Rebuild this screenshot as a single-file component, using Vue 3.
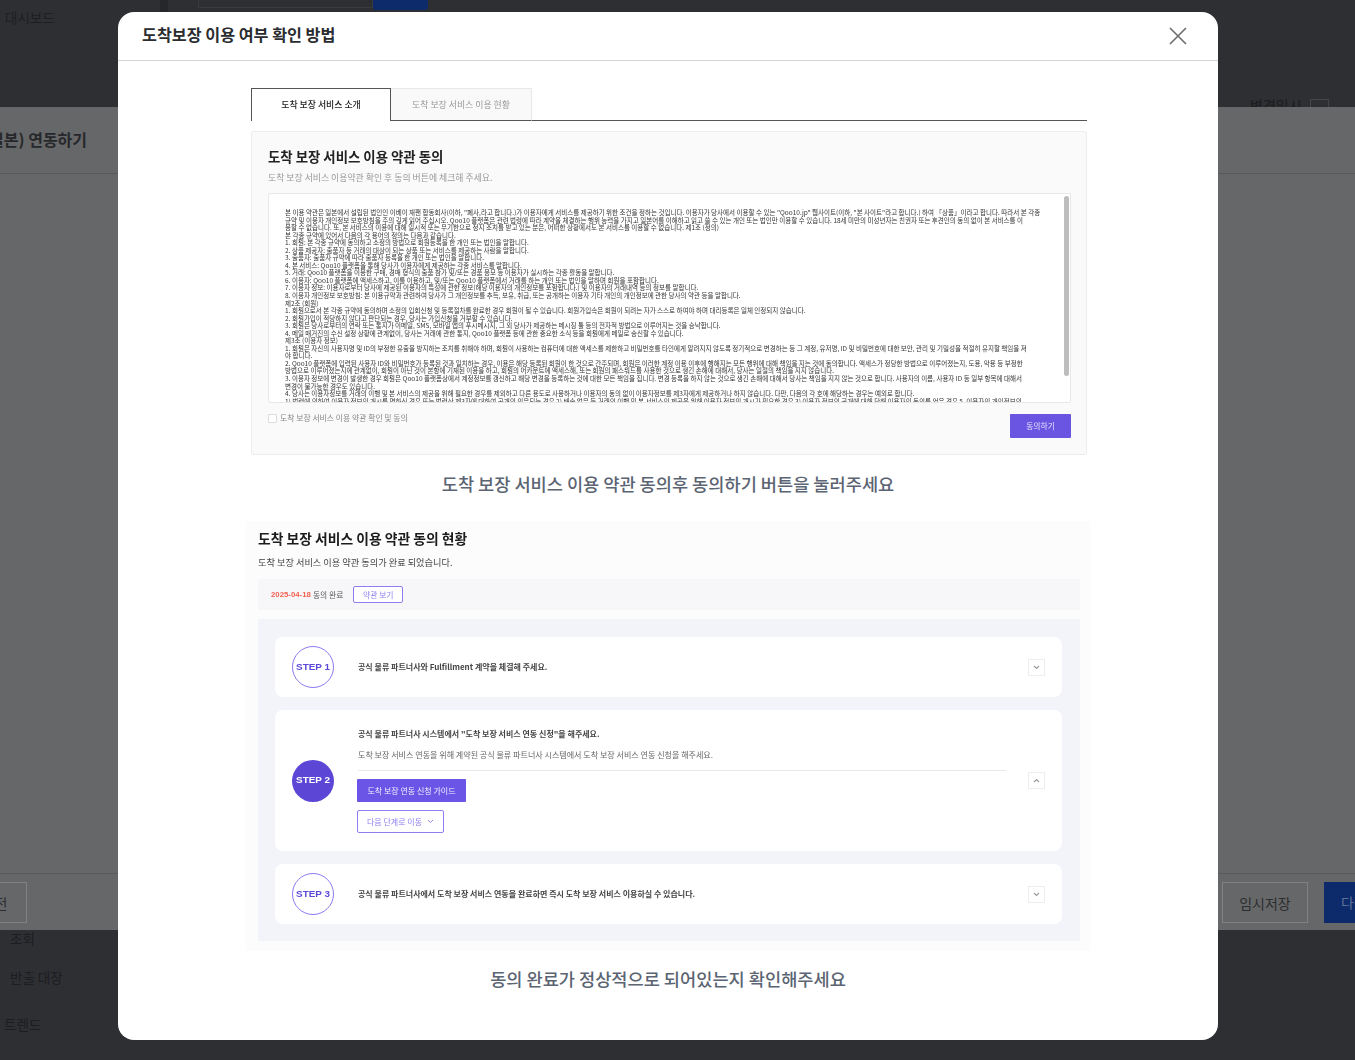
<script setup>
const terms = [
  '본 이용 약관은 일본에서 설립된 법인인 이베이 재팬 합동회사(이하, "폐사,라고 합니다.)가 이용자에게 서비스를 제공하기 위한 조건을 정하는 것입니다. 이용자가 당사에서 이용할 수 있는 "Qoo10.jp" 웹사이트(이하, "본 사이트"라고 합니다.) 하여 「상품」이라고 합니다. 따라서 본 각종',
  '규약 및 이용자 개인정보 보호방침을 주의 깊게 읽어 주십시오. Qoo10 플랫폼은 관련 법령에 따라 계약을 체결하는 행위 능력을 가지고 일본어를 이해하고 읽고 쓸 수 있는 개인 또는 법인만 이용할 수 있습니다. 18세 미만의 미성년자는 친권자 또는 후견인의 동의 없이 본 서비스를 이',
  '용할 수 없습니다. 또, 본 서비스의 이용에 대해 일시적 또는 무기한으로 정지 조치를 받고 있는 분은, 어떠한 상황에서도 본 서비스를 이용할 수 없습니다. 제1조 (정의)',
  '본 각종 규약에 있어서 다음의 각 용어의 정의는 다음과 같습니다.',
  '1. 회원: 본 각종 규약에 동의하고 소정의 방법으로 회원등록을 한 개인 또는 법인을 말합니다.',
  '2. 상품 제공자: 출품자 등 거래의 대상이 되는 상품 또는 서비스를 제공하는 사람을 말합니다.',
  '3. 출품자: 출품자 규약에 따라 출품자 등록을 한 개인 또는 법인을 말합니다.',
  '4. 본 서비스: Qoo10 플랫폼을 통해 당사가 이용자에게 제공하는 각종 서비스를 말합니다.',
  '5. 거래: Qoo10 플랫폼을 이용한 구매, 경매 형식의 출품 참가 및/또는 경품 응모 등 이용자가 실시하는 각종 활동을 말합니다.',
  '6. 이용자: Qoo10 플랫폼에 액세스하고, 이를 이용하고, 및/또는 Qoo10 플랫폼에서 거래를 하는 개인 또는 법인을 말하며 회원을 포함합니다.',
  '7. 이용자 정보: 이용자로부터 당사에 제공된 이용자의 특성에 관한 정보(해당 이용자의 개인정보를 포함합니다.) 및 이용자의 거래내역 등의 정보를 말합니다.',
  '8. 이용자 개인정보 보호방침: 본 이용규약과 관련하여 당사가 그 개인정보를 추득, 보유, 취급, 또는 공개하는 이용자 기타 개인의 개인정보에 관한 당사의 약관 등을 말합니다.',
  '제2조 (회원)',
  '1. 회원으로서 본 각종 규약에 동의하며 소정의 입회신청 및 등록절차를 완료한 경우 회원이 될 수 있습니다. 회원가입속은 회원이 되려는 자가 스스로 하여야 하며 대리등록은 일체 인정되지 않습니다.',
  '2. 회원가입이 적당하지 않다고 판단되는 경우, 당사는 가입신청을 거부할 수 있습니다.',
  '3. 회원은 당사로부터의 연락 또는 통지가 이메일, SMS, 모바일 앱의 푸시메시지, 그 외 당사가 제공하는 메시징 툴 등의 전자적 방법으로 이루어지는 것을 승낙합니다.',
  '4. 메일 매거진의 수신 설정 상황에 관계없이, 당사는 거래에 관한 통지, Qoo10 플랫폼 등에 관한 중요한 소식 등을 회원에게 메일로 송신할 수 있습니다.',
  '제3조 (이용자 정보)',
  '1. 회원은 자신의 사용자명 및 ID의 부정한 유출을 방지하는 조치를 취해야 하며, 회원이 사용하는 컴퓨터에 대한 액세스를 제한하고 비밀번호를 타인에게 알려지지 않도록 정기적으로 변경하는 등 그 계정, 유저명, ID 및 비밀번호에 대한 보안, 관리 및 기밀성을 적절히 유지할 책임을 져',
  '야 합니다.',
  '2. Qoo10 플랫폼에 입력된 사용자 ID와 비밀번호가 등록된 것과 일치하는 경우, 이용은 해당 등록된 회원이 한 것으로 간주되며, 회원은 이러한 계정 이용 이후에 행해지는 모든 행위에 대해 책임을 지는 것에 동의합니다. 액세스가 정당한 방법으로 이루어졌는지, 도용, 악용 등 부정한',
  '방법으로 이루어졌는지에 관계없이, 회원이 아닌 것이 본항에 기재된 이용을 하고, 회원의 어카운트에 액세스해, 또는 회원의 패스워드를 사용한 것으로 생긴 손해에 대해서, 당사는 일절의 책임을 지지 않습니다.',
  '3. 이용자 정보에 변경이 발생한 경우 회원은 Qoo10 플랫폼상에서 계정정보를 갱신하고 해당 변경을 등록하는 것에 대한 모든 책임을 집니다. 변경 등록을 하지 않는 것으로 생긴 손해에 대해서 당사는 책임을 지지 않는 것으로 합니다. 사용자의 이름, 사용자 ID 등 일부 항목에 대해서',
  '변경이 불가능한 경우도 있습니다.',
  '4. 당사는 이용자정보를 거래의 이행 및 본 서비스의 제공을 위해 필요한 경우를 제외하고 다른 용도로 사용하거나 이용자의 동의 없이 이용자정보를 제3자에게 제공하거나 하지 않습니다. 다만, 다음의 각 호에 해당하는 경우는 예외로 합니다.',
  '1) 법령에 의하여 이용자 정보의 개시를 명하신 경우 또는 법령상 제3자에 대하여 공개의 의무되는 경우 2) 배송 업무 등 거래의 이행 및 본 서비스의 제공을 위해 이용자 정보의 개시가 필요한 경우 3) 이용자 정보의 공개에 대해 당해 이용자의 동의를 얻은 경우 5. 이용자의 개인정보의'
]
</script>

<template>
  <div class="page">
    <div class="back-top">
      <div class="crumb">대시보드</div>
      <div class="strip"></div>
      <div class="stub"></div>
      <div class="navy"></div>
      <div class="date-head">변경일시<span class="mini-box"></span></div>
    </div>
    <div class="back-main">
      <div class="main-head">(일본) 연동하기</div>
      <div class="main-fill"></div>
      <div class="main-foot">
        <div class="ghost prev">이전</div>
        <div class="ghost save">임시저장</div>
        <div class="next">다음</div>
      </div>
    </div>
    <div class="back-bottom">
      <div class="nav-sub">조회</div>
      <div class="nav-sub second">반출 대장</div>
      <div class="nav-main">트렌드</div>
    </div>

    <section class="modal">
      <header class="modal-head">
        <h2>도착보장 이용 여부 확인 방법</h2>
        <svg class="close" width="20" height="20" viewBox="0 0 20 20" fill="none" stroke="#6f6f6f" stroke-width="1.7">
          <path d="M2 2 18 18M18 2 2 18" />
        </svg>
      </header>

      <div class="modal-body">
        <div class="shot one">
          <div class="tabs">
            <div class="tab on">도착 보장 서비스 소개</div>
            <div class="tab off">도착 보장 서비스 이용 현황</div>
            <div class="tab-rest"></div>
          </div>
          <div class="agree">
            <h3>도착 보장 서비스 이용 약관 동의</h3>
            <p class="agree-sub">도착 보장 서비스 이용약관 확인 후 동의 버튼에 체크해 주세요.</p>
            <div class="terms">
              <div v-for="(line, i) in terms" :key="i" class="term">{{ line }}</div>
              <div class="thumb"></div>
            </div>
            <div class="agree-foot">
              <label class="check"><span class="box"></span>도착 보장 서비스 이용 약관 확인 및 동의</label>
              <div class="agree-btn">동의하기</div>
            </div>
          </div>
        </div>

        <p class="caption first">도착 보장 서비스 이용 약관 동의후 동의하기 버튼을 눌러주세요</p>

        <div class="shot two">
          <h3>도착 보장 서비스 이용 약관 동의 현황</h3>
          <p class="two-sub">도착 보장 서비스 이용 약관 동의가 완료 되었습니다.</p>
          <div class="status">
            <span class="date">2025-04-18</span>
            <span class="done">동의 완료</span>
            <span class="outline view">약관 보기</span>
          </div>
          <div class="steps">
            <article class="step short">
              <div class="circle">STEP 1</div>
              <div class="step-text"><b>공식 물류 파트너사와 Fulfillment 계약을 체결해 주세요.</b></div>
              <div class="chev"><svg width="7" height="5" viewBox="0 0 7 5" fill="none" stroke="#999" stroke-width="1.1"><path d="M1 1l2.5 2.5L6 1" /></svg></div>
            </article>
            <article class="step tall">
              <div class="circle fill">STEP 2</div>
              <div class="step-text">
                <b>공식 물류 파트너사 시스템에서 "도착 보장 서비스 연동 신청"을 해주세요.</b>
                <p class="desc">도착 보장 서비스 연동을 위해 계약된 공식 물류 파트너사 시스템에서 도착 보장 서비스 연동 신청을 해주세요.</p>
                <div class="rule"></div>
                <div class="guide">도착 보장 연동 신청 가이드</div>
                <div class="outline move">
                  다음 단계로 이동
                  <svg width="7" height="5" viewBox="0 0 7 5" fill="none" stroke="#8a7cf0" stroke-width=".9"><path d="M1 1l2.5 2.5L6 1" /></svg>
                </div>
              </div>
              <div class="chev"><svg width="7" height="5" viewBox="0 0 7 5" fill="none" stroke="#999" stroke-width="1.1"><path d="M1 4l2.5-2.5L6 4" /></svg></div>
            </article>
            <article class="step short">
              <div class="circle">STEP 3</div>
              <div class="step-text"><b>공식 물류 파트너사에서 도착 보장 서비스 연동을 완료하면 즉시 도착 보장 서비스 이용하실 수 있습니다.</b></div>
              <div class="chev"><svg width="7" height="5" viewBox="0 0 7 5" fill="none" stroke="#999" stroke-width="1.1"><path d="M1 1l2.5 2.5L6 1" /></svg></div>
            </article>
          </div>
        </div>

        <p class="caption second">동의 완료가 정상적으로 되어있는지 확인해주세요</p>
      </div>
    </section>
  </div>
</template>

<style scoped>
.page {
  position: relative;
  width: 1355px;
  height: 1060px;
  overflow: hidden;
  background: #2e2f33;
  font-family: "Noto Sans CJK KR", "Noto Sans", sans-serif;
  display: flex;
  flex-direction: column;
}
h2, h3, p { margin: 0; }

/* dimmed page behind the dialog */
.back-top {
  height: 107px;
  flex: none;
  display: flex;
  align-items: flex-start;
  color: #1d1e21;
  overflow: hidden;
}
.crumb { margin: 7px 0 0 5px; width: 155px; font-size: 13.5px; line-height: 20px; flex: none; }
.strip { width: 8px; height: 36px; background: #26272a; flex: none; }
.stub { margin-left: 30px; width: 175px; height: 8px; box-sizing: border-box; border: 1px solid #3a3b3f; border-top: 0; flex: none; }
.navy { width: 55px; height: 10px; background: #0d2a6b; border-radius: 0 0 3px 3px; flex: none; }
.date-head { margin: 95px 0 0 822px; font-size: 14px; font-weight: 500; line-height: 20px; display: flex; flex: none; }
.mini-box { margin: 4px 0 0 8px; width: 17px; height: 17px; border: 1px solid #45464a; }
.back-main {
  height: 823px;
  flex: none;
  background: #666768;
  display: flex;
  flex-direction: column;
}
.main-head {
  height: 67px;
  padding: 20px 0 0;
  margin-left: -17px;
  box-sizing: border-box;
  font-size: 16px;
  font-weight: 700;
  line-height: 24px;
  color: #27282b;
  border-bottom: 1px solid #58595b;
  flex: none;
}
.main-fill { flex: 1; }
.main-foot {
  height: 57px;
  box-sizing: border-box;
  flex: none;
  border-top: 1px solid #58595b;
  padding-top: 8px;
  display: flex;
  align-items: flex-start;
  color: #2c2d30;
  font-size: 14px;
}
.ghost {
  height: 41px;
  box-sizing: border-box;
  border: 1px solid #808183;
  display: flex;
  align-items: center;
  justify-content: center;
  flex: none;
}
.prev { width: 48px; margin-left: -21px; padding-right: 17px; }
.save { width: 86px; margin-left: 1195px; }
.next {
  margin-left: 16px;
  width: 60px;
  height: 41px;
  background: #0d2a6b;
  color: #5f6f97;
  padding-left: 17px;
  line-height: 41px;
  flex: none;
  box-sizing: border-box;
}
.back-bottom { flex: 1; color: #1c1d20; font-size: 13.5px; line-height: 20px; }
.nav-sub { margin: -2px 0 0 10px; }
.nav-sub.second { margin-top: 19px; }
.nav-main { margin: 27px 0 0 4px; }

/* dialog, overlaid on the page */
.modal {
  position: absolute;
  left: 118px;
  top: 12px;
  width: 1100px;
  height: 1028px;
  background: #fff;
  border-radius: 16px;
  overflow: hidden;
}
.modal-head {
  height: 49px;
  box-sizing: border-box;
  padding: 0 30px 0 24px;
  border-bottom: 1px solid #d4d4d4;
  display: flex;
  align-items: center;
  justify-content: space-between;
}
.modal-head h2 {
  font-size: 16.2px;
  font-weight: 700;
  line-height: 46px;
  color: #2a2c30;
  margin-bottom: 4px;
}
.modal-body { display: flex; flex-direction: column; align-items: flex-start; }

.shot { filter: blur(.3px); }
.shot.one { width: 836px; margin: 27px 0 0 133px; }
.tabs { display: flex; height: 33px; }
.tab {
  width: 140px;
  box-sizing: border-box;
  font-size: 8.9px;
  line-height: 31px;
  text-align: center;
  flex: none;
}
.tab.on { border: 1px solid #555; border-bottom: 0; color: #222; font-weight: 500; }
.tab.off { width: 141px; border: 1px solid #e8e8e8; border-left: 0; border-bottom: 1px solid #555; background: #f9f9f9; color: #999; }
.tab-rest { flex: 1; border-bottom: 1px solid #555; }
.agree {
  margin-top: 10px;
  height: 324px;
  box-sizing: border-box;
  padding: 14px 15px 0 16px;
  background: #fafafa;
  border: 1px solid #ededed;
  border-radius: 2px;
}
.agree h3 { font-size: 13.4px; font-weight: 700; line-height: 20px; color: #222; }
.agree-sub { margin-top: 5px; font-size: 8.9px; line-height: 13px; color: #999; }
.terms {
  position: relative;
  margin-top: 9px;
  height: 210px;
  box-sizing: border-box;
  padding: 15px 16px 0;
  background: #fff;
  border: 1px solid #e8e8e8;
  border-radius: 2px;
  overflow: hidden;
}
.term {
  font-size: 6.52px;
  line-height: 7.55px;
  white-space: nowrap;
  color: #333;
}
.thumb {
  position: absolute;
  right: 1px;
  top: 2px;
  width: 5px;
  height: 180px;
  background: #bdbdbd;
  border-radius: 3px;
}
.agree-foot { display: flex; justify-content: space-between; margin-top: 11px; }
.check { display: flex; align-items: flex-start; font-size: 7.85px; line-height: 10px; color: #888; margin-top: -1px; }
.box {
  width: 9px;
  height: 9px;
  box-sizing: border-box;
  margin: 1px 3px 0 0;
  background: #fff;
  border: 1px solid #ddd;
  border-radius: 1px;
}
.agree-btn {
  width: 61px;
  height: 24px;
  background: #6a55e2;
  border-radius: 1px;
  color: #e6e1ff;
  font-size: 7.8px;
  line-height: 24px;
  text-align: center;
}
.caption {
  width: 1100px;
  text-align: center;
  font-size: 17.6px;
  font-weight: 500;
  line-height: 26px;
  color: #5b6472;
}
.caption.first { margin-top: 16px; }
.caption.second { margin-top: 15px; }

.shot.two {
  width: 844px;
  height: 430px;
  box-sizing: border-box;
  margin: 24px 0 0 128px;
  padding: 7px 10px 0 12px;
  background: #fcfcfd;
}
.two h3 { font-size: 13.8px; font-weight: 700; line-height: 20px; color: #1c1c1c; }
.two-sub { margin-top: 7px; font-size: 9.2px; line-height: 14px; color: #444; }
.status {
  margin-top: 10px;
  height: 31px;
  display: flex;
  align-items: center;
  padding-left: 13px;
  background: #f7f7fa;
  font-size: 7.8px;
}
.date { color: #f2604f; font-family: "Liberation Sans", sans-serif; font-weight: 700; font-size: 7.8px; }
.done { margin-left: 2px; color: #555; }
.outline {
  box-sizing: border-box;
  background: #fff;
  border: 1px solid #8e80f0;
  border-radius: 2px;
  color: #8e80f0;
  display: flex;
  align-items: center;
  justify-content: center;
}
.view { margin-left: 10px; width: 50px; height: 17px; }
.steps {
  margin-top: 9px;
  height: 322px;
  box-sizing: border-box;
  padding: 18px 18px 0 17px;
  background: #f3f4fa;
  display: flex;
  flex-direction: column;
  gap: 13px;
}
.step {
  display: flex;
  align-items: center;
  background: #fff;
  border-radius: 8px;
  padding: 0 17px;
}
.step.short { height: 60px; }
.step.tall { height: 141px; }
.circle {
  width: 42px;
  height: 42px;
  flex: none;
  box-sizing: border-box;
  border: 1px solid #8a7cf0;
  border-radius: 50%;
  display: flex;
  align-items: center;
  justify-content: center;
  padding-bottom: 2px;
  font-family: "Liberation Sans", sans-serif;
  font-size: 9.9px;
  font-weight: 700;
  color: #5c49d8;
}
.circle.fill { background: #5c46d6; color: #fff; border: 0; }
.step-text {
  flex: 1;
  margin-left: 24px;
  font-size: 8px;
  line-height: 12px;
  color: #444;
  min-width: 0;
}
.step-text b { font-weight: 700; display: block; }
.desc { margin-top: 9px; font-size: 8.05px; color: #666; }
.rule { margin: 9px 22px 0 0; height: 1px; background: #e8e8ea; }
.guide {
  margin: 8px 0 0 -1px;
  width: 109px;
  height: 23px;
  background: #6a55e6;
  border-radius: 1px;
  color: #f1eeff;
  font-size: 8px;
  line-height: 23px;
  text-align: center;
}
.move { margin: 8px 0 0 -1px; width: 87px; height: 23px; gap: 5px; font-size: 8px; }
.chev {
  width: 17px;
  height: 17px;
  flex: none;
  box-sizing: border-box;
  border: 1px solid #eceded;
  display: flex;
  align-items: center;
  justify-content: center;
  background: #fff;
}
</style>
